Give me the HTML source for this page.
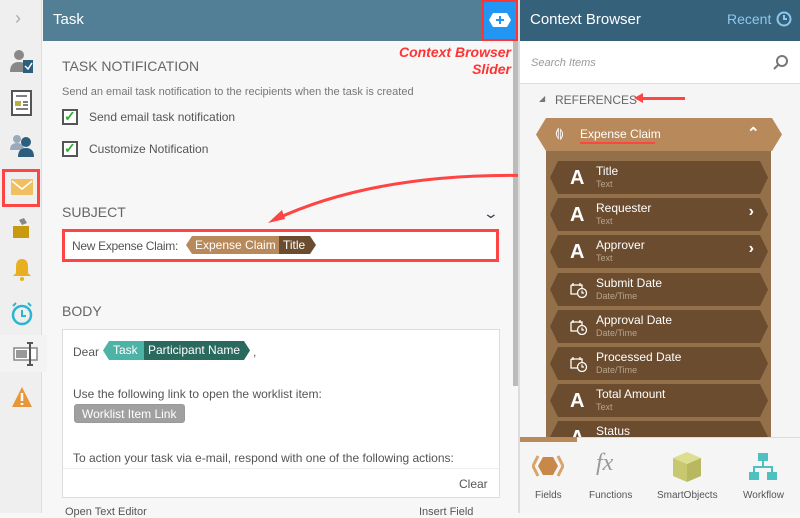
<!DOCTYPE html>
<html><head><meta charset="utf-8"><style>
*{box-sizing:border-box;margin:0;padding:0}
body{width:800px;height:513px;overflow:hidden;font-family:"Liberation Sans",sans-serif;background:#f7f7f7;position:relative;color:#555}
.abs{position:absolute}
.side{left:0;top:0;width:42px;height:513px;background:#efefef;border-right:1px solid #ddd}
.th{left:43px;top:0;width:477px;height:41px;background:#527f96;color:#fff;font-size:15px;padding:11px 0 0 10px}
.ch{left:520px;top:0;width:280px;height:41px;background:#35617a;color:#fff;font-size:15px;padding:11px 0 0 10px}
.cb{width:16px;height:16px;border:2px solid #555;background:#fff}
.it{position:absolute;left:550px;width:218px;height:33px;background:#6b4c2f;clip-path:polygon(8px 0,210px 0,218px 50%,210px 100%,8px 100%,0 50%);color:#fff}
.it b{position:absolute;left:20px;top:6px;font-size:20px;font-family:"Liberation Sans",sans-serif}
.it svg{position:absolute;left:20px;top:9px}
.it .n{position:absolute;left:46px;top:3px;font-size:12px}
.it .t{position:absolute;left:46px;top:18px;font-size:9px;color:#b8a48e}
.it .ar{position:absolute;right:14px;top:5px;font-size:16px;font-weight:bold}
.tab{position:absolute;top:490px;font-size:10px;color:#555;text-align:center}
</style></head><body>
<div class="abs side"></div>
<div class="abs" style="left:15px;top:8px;font-size:18px;color:#aaa">&#x203A;</div>
<svg class="abs" style="left:9px;top:48px" width="26" height="28"><circle cx="10" cy="7" r="5" fill="#888"/><path d="M1 24q0-10 9-10q6 0 8 4v6z" fill="#888"/><rect x="14" y="12" width="10" height="13" fill="#2b5f7d"/><path d="M16 18l3 3 4-6" stroke="#fff" stroke-width="1.5" fill="none"/></svg>
<svg class="abs" style="left:11px;top:90px" width="22" height="26"><rect x="1" y="1" width="19" height="24" fill="#fff" stroke="#555" stroke-width="2"/><rect x="4" y="11" width="6" height="5" fill="#b8b03a"/><path d="M5 6h11M12 12h5M12 15h5M5 19h12" stroke="#555" stroke-width="1.5"/></svg>
<svg class="abs" style="left:9px;top:132px" width="26" height="26"><circle cx="8" cy="7" r="4" fill="#9ab"/><path d="M1 18q0-7 7-7t7 7z" fill="#9ab"/><circle cx="17" cy="10" r="5" fill="#2b5f7d"/><path d="M9 25q0-9 8-9t8 9z" fill="#2b5f7d"/></svg>
<div class="abs" style="left:2px;top:169px;width:38px;height:38px;border:3px solid #f44"></div>
<svg class="abs" style="left:11px;top:179px" width="22" height="16"><rect width="22" height="16" rx="1" fill="#f0c060"/><path d="M1 2l10 8 10-8" stroke="#fff" stroke-width="1.5" fill="none"/></svg>
<svg class="abs" style="left:13px;top:217px" width="18" height="22"><path d="M6 3l5-2 3 5-5 2z" fill="#888"/><rect y="9" width="16" height="12" fill="#c89a10"/></svg>
<svg class="abs" style="left:12px;top:258px" width="20" height="24"><path d="M10 1q6 0 6 8v6l3 3H1l3-3V9q0-8 6-8z" fill="#e8b020"/><circle cx="10" cy="21" r="2" fill="#e8b020"/></svg>
<svg class="abs" style="left:10px;top:300px" width="24" height="26"><circle cx="12" cy="15" r="9" stroke="#2ab6d0" stroke-width="2.5" fill="none"/><path d="M12 10v6h4M6 3l-3 3M18 3l3 3" stroke="#2ab6d0" stroke-width="2" fill="none"/></svg>
<div class="abs" style="left:0;top:335px;width:47px;height:37px;background:#f3f3f3"></div>
<svg class="abs" style="left:13px;top:341px" width="26" height="26"><rect x="1" y="7" width="23" height="12" fill="#fff" stroke="#888" stroke-width="1.5"/><rect x="3" y="9" width="11" height="8" fill="#999"/><path d="M17 2v22M14 2h6M14 24h6" stroke="#555" stroke-width="2"/></svg>
<svg class="abs" style="left:11px;top:386px" width="22" height="22"><path d="M11 1L21 21H1z" fill="#e8963a"/><path d="M11 7v8M11 17v2" stroke="#fff" stroke-width="2.5"/></svg>

<div class="abs th">Task</div>
<div class="abs" style="left:482px;top:0;width:36px;height:41px;background:#2196f3;border:2px solid #f33"></div>
<svg class="abs" style="left:488px;top:12px" width="24" height="16"><path d="M5 1h14l4 7-4 7H5L1 8z" fill="#fff"/><path d="M12 4v8M8 8h8" stroke="#2196f3" stroke-width="2"/></svg>
<div class="abs" style="left:513px;top:41px;width:5px;height:345px;background:#bbb"></div>
<div class="abs" style="left:378px;top:44px;width:133px;text-align:right;color:#f33;font-weight:bold;font-style:italic;font-size:14px;line-height:17px">Context Browser<br>Slider</div>
<div class="abs" style="left:62px;top:58px;font-size:14px;color:#666">TASK NOTIFICATION</div>
<div class="abs" style="left:62px;top:86px;font-size:11px;color:#777">Send an email task notification to the recipients when the task is created</div>
<div class="abs cb" style="left:62px;top:109px"></div><div class="abs" style="left:64px;top:108px;color:#3a3;font-size:14px;font-weight:bold">✓</div>
<div class="abs" style="left:89px;top:110px;font-size:12px;color:#555">Send email task notification</div>
<div class="abs cb" style="left:62px;top:141px"></div><div class="abs" style="left:64px;top:140px;color:#3a3;font-size:14px;font-weight:bold">✓</div>
<div class="abs" style="left:89px;top:142px;font-size:12px;color:#555">Customize Notification</div>
<div class="abs" style="left:62px;top:204px;font-size:14px;color:#666">SUBJECT</div>
<div class="abs" style="left:485px;top:205px;font-size:14px;color:#345;transform:scaleX(1.4)">&#x2304;</div>
<div class="abs" style="left:62px;top:229px;width:437px;height:33px;background:#fff;border:3px solid #f44"></div>
<div class="abs" style="left:72px;top:239px;font-size:12px;color:#555;letter-spacing:-0.3px">New Expense Claim:</div>
<div class="abs" style="left:186px;top:236px;width:93px;height:18px;background:#b8895a;clip-path:polygon(6px 0,100% 0,100% 100%,6px 100%,0 50%);color:#fff;font-size:12px;padding:2px 0 0 9px">Expense Claim</div>
<div class="abs" style="left:279px;top:236px;width:37px;height:18px;background:#6b4c2f;clip-path:polygon(0 0,31px 0,100% 50%,31px 100%,0 100%);color:#fff;font-size:12px;padding:2px 0 0 4px">Title</div>
<svg class="abs" style="left:260px;top:165px" width="300" height="65"><path d="M287 11Q120 5 14 55" stroke="#f44" stroke-width="3" fill="none"/><path d="M8 58l14-13 3 9z" fill="#f44"/></svg>
<div class="abs" style="left:62px;top:303px;font-size:14px;color:#666">BODY</div>
<div class="abs" style="left:62px;top:329px;width:438px;height:169px;background:#fff;border:1px solid #ddd"></div>
<div class="abs" style="left:63px;top:468px;width:436px;border-top:1px solid #eee"></div>
<div class="abs" style="left:73px;top:345px;font-size:12px">Dear</div>
<div class="abs" style="left:103px;top:341px;width:41px;height:19px;background:#4db3a7;clip-path:polygon(6px 0,100% 0,100% 100%,6px 100%,0 50%);color:#fff;font-size:12px;padding:2px 0 0 10px">Task</div>
<div class="abs" style="left:144px;top:341px;width:106px;height:19px;background:#2a6a5e;clip-path:polygon(0 0,100px 0,100% 50%,100px 100%,0 100%);color:#fff;font-size:12px;padding:2px 0 0 4px">Participant Name</div>
<div class="abs" style="left:253px;top:345px;font-size:12px">,</div>
<div class="abs" style="left:73px;top:387px;font-size:12px">Use the following link to open the worklist item:</div>
<div class="abs" style="left:74px;top:404px;width:111px;height:19px;background:#a0a0a0;border:1px solid #999;border-radius:3px;color:#fff;font-size:12px;padding:2px 0 0 7px">Worklist Item Link</div>
<div class="abs" style="left:73px;top:451px;font-size:12px">To action your task via e-mail, respond with one of the following actions:</div>
<div class="abs" style="left:459px;top:477px;font-size:12px">Clear</div>
<div class="abs" style="left:65px;top:506px;font-size:11px">Open Text Editor</div>
<div class="abs" style="left:419px;top:506px;font-size:11px">Insert Field</div>

<div class="abs" style="left:518px;top:0;width:2px;height:513px;background:#ddd"></div>
<div class="abs ch">Context Browser</div>
<div class="abs" style="left:727px;top:11px;font-size:14px;color:#8cc8ee">Recent</div>
<svg class="abs" style="left:776px;top:11px" width="16" height="16"><circle cx="8" cy="8" r="6.5" stroke="#8cc8ee" stroke-width="2" fill="none"/><path d="M8 4v4h3" stroke="#8cc8ee" stroke-width="2" fill="none"/></svg>
<div class="abs" style="left:520px;top:41px;width:280px;height:43px;background:#fff;border-bottom:1px solid #ddd"></div>
<div class="abs" style="left:531px;top:57px;font-size:11px;font-style:italic;color:#999">Search Items</div>
<svg class="abs" style="left:773px;top:54px" width="16" height="16"><circle cx="9" cy="7" r="5" stroke="#777" stroke-width="2" fill="none"/><path d="M5 11l-4 4" stroke="#777" stroke-width="2"/></svg>
<div class="abs" style="left:520px;top:84px;width:280px;height:353px;background:#f5f5f5"></div>
<div class="abs" style="left:539px;top:94px;font-size:8px;color:#777">◢</div>
<div class="abs" style="left:555px;top:93px;font-size:12px;color:#666">REFERENCES</div>
<div class="abs" style="left:640px;top:97px;width:45px;height:3px;background:#f44"></div><div class="abs" style="left:634px;top:93px;width:0;height:0;border:5px solid transparent;border-right:9px solid #f44;border-left:0"></div>
<div class="abs" style="left:546px;top:150px;width:225px;height:290px;background:#93704a"></div>
<div class="abs" style="left:536px;top:118px;width:246px;height:33px;background:#b8895a;clip-path:polygon(10px 0,236px 0,100% 50%,236px 100%,10px 100%,0 50%)"></div>
<div class="abs" style="left:555px;top:126px;font-size:12px;color:#fff">⟬⟭</div>
<div class="abs" style="left:580px;top:127px;font-size:12px;color:#fff">Expense Claim</div>
<div class="abs" style="left:580px;top:142px;width:75px;height:2px;background:#f44"></div>
<div class="abs" style="left:747px;top:124px;font-size:15px;color:#fff;font-weight:bold">&#x2303;</div>
<div class="it" style="top:161px"><b>A</b><span class="n">Title</span><span class="t">Text</span></div>
<div class="it" style="top:198px"><b>A</b><span class="n">Requester</span><span class="t">Text</span><span class="ar">›</span></div>
<div class="it" style="top:235px"><b>A</b><span class="n">Approver</span><span class="t">Text</span><span class="ar">›</span></div>
<div class="it" style="top:273px"><svg width="18" height="16"><path d="M1 3h11v6M1 3v9h6M3 1v3M10 1v3" stroke="#fff" stroke-width="1.3" fill="none"/><circle cx="12" cy="11" r="4.5" stroke="#fff" stroke-width="1.3" fill="#6b4c2f"/><path d="M12 8.5v2.5h2" stroke="#fff" stroke-width="1.2" fill="none"/></svg><span class="n">Submit Date</span><span class="t">Date/Time</span></div>
<div class="it" style="top:310px"><svg width="18" height="16"><path d="M1 3h11v6M1 3v9h6M3 1v3M10 1v3" stroke="#fff" stroke-width="1.3" fill="none"/><circle cx="12" cy="11" r="4.5" stroke="#fff" stroke-width="1.3" fill="#6b4c2f"/><path d="M12 8.5v2.5h2" stroke="#fff" stroke-width="1.2" fill="none"/></svg><span class="n">Approval Date</span><span class="t">Date/Time</span></div>
<div class="it" style="top:347px"><svg width="18" height="16"><path d="M1 3h11v6M1 3v9h6M3 1v3M10 1v3" stroke="#fff" stroke-width="1.3" fill="none"/><circle cx="12" cy="11" r="4.5" stroke="#fff" stroke-width="1.3" fill="#6b4c2f"/><path d="M12 8.5v2.5h2" stroke="#fff" stroke-width="1.2" fill="none"/></svg><span class="n">Processed Date</span><span class="t">Date/Time</span></div>
<div class="it" style="top:384px"><b>A</b><span class="n">Total Amount</span><span class="t">Text</span></div>
<div class="it" style="top:421px;height:16px;clip-path:polygon(8px 0,210px 0,218px 100%,0 100%)"><b>A</b><span class="n">Status</span></div>
<div class="abs" style="left:520px;top:437px;width:280px;height:76px;background:#f5f5f5;border-top:1px solid #ddd"></div>
<div class="abs" style="left:520px;top:437px;width:57px;height:5px;background:#b8895a"></div>
<svg class="abs" style="left:532px;top:455px" width="32" height="22"><path d="M6 1L1 11l5 10M26 1l5 10-5 10" stroke="#d9a46a" stroke-width="3" fill="none"/><path d="M11 2h10l5 9-5 9H11L6 11z" fill="#c8884a"/></svg>
<div class="abs" style="left:596px;top:450px;font-size:24px;font-style:italic;color:#999;font-family:'Liberation Serif',serif">fx</div>
<svg class="abs" style="left:672px;top:451px" width="30" height="32"><path d="M15 1l14 6-14 6-14-6z" fill="#dede90"/><path d="M1 7l14 6v18L1 25z" fill="#c8c870"/><path d="M29 7l-14 6v18l14-6z" fill="#b8b860"/></svg>
<svg class="abs" style="left:748px;top:452px" width="30" height="30"><rect x="10" y="1" width="10" height="8" fill="#4fc0c0"/><rect x="1" y="20" width="10" height="8" fill="#4fc0c0"/><rect x="19" y="20" width="10" height="8" fill="#4fc0c0"/><path d="M15 9v6M6 20v-5h18v5" stroke="#4fc0c0" stroke-width="2" fill="none"/></svg>
<div class="tab" style="left:535px">Fields</div>
<div class="tab" style="left:589px">Functions</div>
<div class="tab" style="left:657px">SmartObjects</div>
<div class="tab" style="left:743px">Workflow</div>
</body></html>
